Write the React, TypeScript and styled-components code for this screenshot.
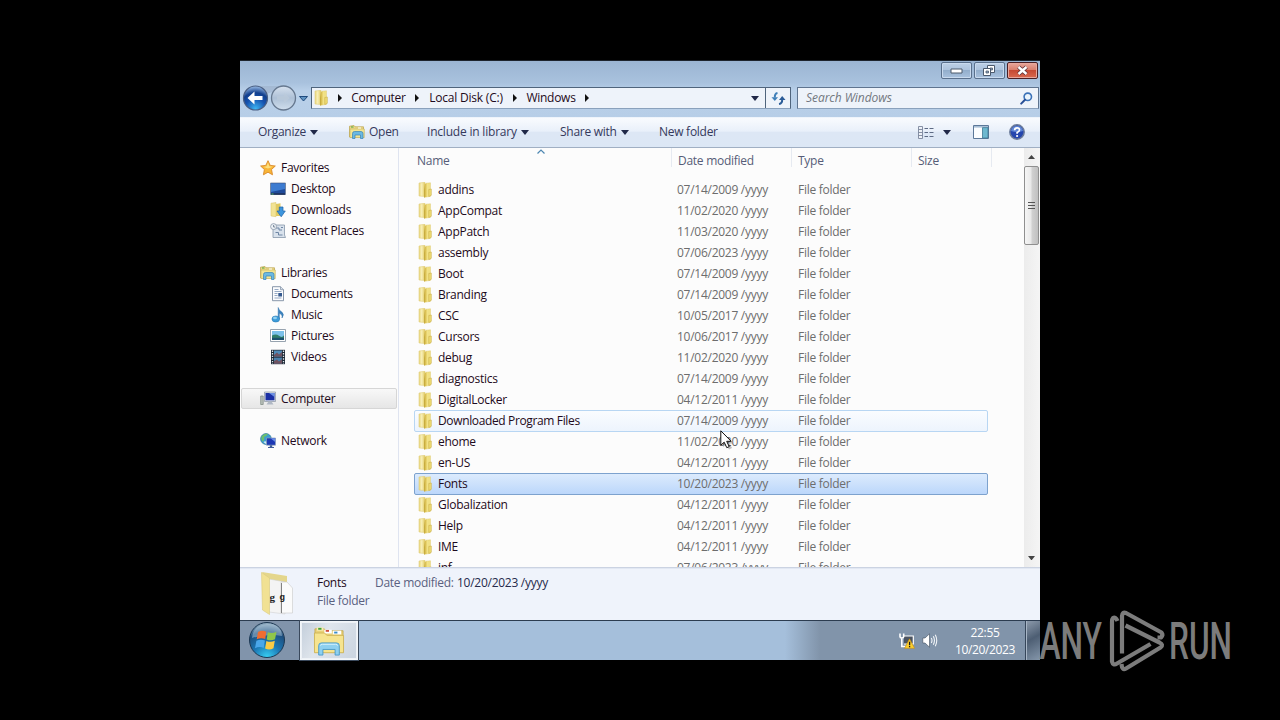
import React from "react";
import styled, { createGlobalStyle } from "styled-components";

const Global = createGlobalStyle`
  * { box-sizing: border-box; }
  body { margin: 0; background: #000; font: 12px/21px "Open Sans", "Noto Sans", sans-serif; color: #1e0a20; overflow: hidden; }
  svg { display: block; flex: none; }
`;

const Screen = styled.div`
  position: relative;
  width: 1280px;
  height: 720px;
  background: #000;
  padding: 60px 240px;
`;
const Desktop = styled.div`
  width: 800px;
  height: 600px;
  display: flex;
  flex-direction: column;
  background: #fcfcfc;
  white-space: nowrap;
  cursor: default;
`;
const Text = styled.span<{ $track?: number; $color?: string }>`
  letter-spacing: ${(p) => p.$track ?? -0.27}px;
  color: ${(p) => p.$color ?? "inherit"};
`;

/* Title bar and navigation */
const Frame = styled.header`
  height: 57px;
  border-top: 1px solid #1d242d;
  background: linear-gradient(#9bb5d3, #a9c2de 22px, #b9d0e9 30px, #b7cee7);
`;
const Caption = styled.div`
  height: 26px;
  display: flex;
  justify-content: flex-end;
  gap: 2px;
  padding: 1px 2px 0 0;
`;
const CaptionButton = styled.div<{ $close?: boolean }>`
  width: 31px;
  height: 17px;
  display: flex;
  align-items: center;
  justify-content: center;
  border: 1px solid ${(p) => (p.$close ? "#4a1f24" : "#5a708c")};
  border-radius: 2px;
  box-shadow: inset 0 0 0 1px ${(p) => (p.$close ? "#e8a79c" : "#c9daee")};
  background: ${(p) =>
    p.$close
      ? "linear-gradient(#e8a79c, #d97f6d 45%, #c64a34 50%, #d96a50)"
      : "linear-gradient(#bdd0e6, #adc3dd 45%, #93aecc 50%, #a9c2de)"};
`;
const NavRow = styled.div`
  height: 22px;
  display: flex;
  align-items: center;
  padding: 0 1px 0 2px;
  line-height: 20px;
`;
const NavButtons = styled.div`
  width: 69px;
`;
const Address = styled.div`
  width: 480px;
  height: 22px;
  display: flex;
  align-items: center;
  border: 1px solid #4f647c;
  border-bottom-color: #8aa1bc;
  background: #eef3fa;
`;
const Crumb = styled.div<{ $w: number }>`
  width: ${(p) => p.$w}px;
  display: flex;
  align-items: center;
  justify-content: space-between;
`;
const Grow = styled.div`
  flex: 1;
`;
const DropZone = styled.div`
  width: 20px;
  display: flex;
  justify-content: center;
`;
const Refresh = styled.div`
  width: 25px;
  height: 20px;
  display: flex;
  align-items: center;
  justify-content: center;
  border-left: 1px solid #4f647c;
`;
const Search = styled.div`
  width: 242px;
  height: 22px;
  margin-left: 6px;
  padding: 0 5px 0 8px;
  display: flex;
  align-items: center;
  justify-content: space-between;
  border: 1px solid #5f748f;
  border-bottom-color: #8aa1bc;
  background: #eef3fa;
  font-style: italic;
  color: #72777f;
`;

/* Command bar */
const Toolbar = styled.div`
  height: 31px;
  display: flex;
  align-items: center;
  padding: 0 15px 1px 18px;
  border-top: 1px solid #eef4fb;
  border-bottom: 1px solid #a0afc3;
  background: linear-gradient(#f9fbfe, #e9f0fa 45%, #dde7f5 50%, #dce7f5);
  color: #35395c;
  line-height: 20px;
`;
const Command = styled.div<{ $w: number; $gap?: number }>`
  width: ${(p) => p.$w}px;
  display: flex;
  align-items: center;
  gap: ${(p) => p.$gap ?? 4}px;
`;

/* Body */
const Body = styled.div`
  height: 419px;
  display: flex;
`;
const Sidebar = styled.nav`
  width: 159px;
  padding: 9px 1px 0;
  border-right: 1px solid #dfe4f0;
`;
const SideItem = styled.div<{ $level?: number; $active?: boolean; $space?: boolean }>`
  height: 21px;
  margin-top: ${(p) => (p.$space ? 21 : 0)}px;
  padding-left: ${(p) => (p.$level ? 28 : 18)}px;
  display: flex;
  align-items: center;
  gap: 5px;
  border: 1px solid ${(p) => (p.$active ? "#d6d6d6" : "transparent")};
  border-radius: 2px;
  background: ${(p) => (p.$active ? "linear-gradient(#f8f8f8, #e6e6e6)" : "none")};
`;
const Files = styled.main`
  width: 625px;
  overflow: hidden;
`;
const Header = styled.div`
  height: 31px;
  padding-left: 18px;
  display: flex;
  color: #565c78;
`;
const Heading = styled.div<{ $w: number }>`
  position: relative;
  width: ${(p) => p.$w}px;
  height: 19px;
  margin-right: 6px;
  line-height: 26px;
  border-right: 1px solid #e6eaf1;
`;
const SortMark = styled.div`
  position: absolute;
  left: 120px;
  top: 1px;
`;
const Row = styled.div<{ $state?: string }>`
  width: 574px;
  height: 22px;
  margin: 0 0 -1px 15px;
  padding-left: 3px;
  display: flex;
  align-items: center;
  line-height: 20px;
  border: 1px solid
    ${(p) => (p.$state === "selected" ? "#7da2ce" : p.$state === "hover" ? "#b8d6f3" : "transparent")};
  border-radius: 2px;
  background: ${(p) =>
    p.$state === "selected"
      ? "linear-gradient(#dcebfd, #bcd7fb)"
      : p.$state === "hover"
        ? "linear-gradient(#fafcff, #edf4fd)"
        : "none"};
`;
const NameCell = styled.div`
  width: 259px;
  display: flex;
  align-items: center;
  gap: 5px;
`;
const Cell = styled.div<{ $w: number }>`
  width: ${(p) => p.$w}px;
  color: #6d6d6d;
`;
const Scrollbar = styled.div`
  width: 16px;
  padding-right: 1px;
  display: flex;
  flex-direction: column;
  align-items: center;
  background: linear-gradient(90deg, #ececec, #f5f5f5);
`;
const ScrollEnd = styled.div`
  height: 18px;
  display: flex;
  align-items: center;
`;
const Thumb = styled.div`
  width: 15px;
  height: 79px;
  display: flex;
  align-items: center;
  justify-content: center;
  border: 1px solid #8f8f8f;
  border-radius: 2px;
  background: linear-gradient(90deg, #f5f5f5, #e9e9e9 45%, #d0d0d0 55%, #c0c0c0);
`;

const Details = styled.footer`
  height: 53px;
  display: flex;
  padding: 3px 0 0 20px;
  border-top: 1px solid #cbd3e2;
  box-shadow: inset 0 1px #e2e8f3;
  background: #eff3fb;
  color: #5a6180;
  line-height: 18px;
`;
const DetailColumn = styled.div<{ $w: number }>`
  width: ${(p) => p.$w}px;
  padding-top: 3px;
  display: flex;
  flex-direction: column;
`;
const Preview = styled.div`
  width: 57px;
`;

/* Taskbar */
const Taskbar = styled.div`
  height: 40px;
  display: flex;
  border-top: 1px solid #2c3c50;
  background: linear-gradient(90deg, #8194ab 0 59px, #a5bfdb 60px 545px, #8194aa 580px);
  color: #fff;
`;
const Start = styled.div`
  width: 60px;
  padding-left: 8px;
`;
const TaskButton = styled.div`
  width: 58px;
  height: 39px;
  display: flex;
  align-items: center;
  justify-content: center;
  border: 1px solid #f2f6fa;
  outline: 1px solid #3a495c;
  box-shadow: inset 0 0 0 1px #edf1f6;
  background: linear-gradient(120deg, #c3cedb, #dfe5ec 40%, #cad4e0);
`;
const Tray = styled.div`
  display: flex;
  align-items: center;
  gap: 7px;
  padding-right: 14px;
`;
const Clock = styled.div`
  width: 66px;
  display: flex;
  flex-direction: column;
  align-items: center;
  padding-top: 3px;
  line-height: 17px;
`;
const ShowDesktop = styled.div`
  width: 15px;
  margin-left: 7px;
  border-left: 1px solid #36465a;
  box-shadow: inset 1px 0 #a8b6c6;
  background: linear-gradient(150deg, #8d9bac, #4d5e73 45%, #8496aa);
`;
const Pointer = styled.div`
  position: absolute;
  left: 720px;
  top: 430px;
`;
const Watermark = styled.div`
  position: absolute;
  left: 1036px;
  top: 604px;
`;

/* Glyphs */
const Down = ({ w = 8, c = "#202848" }: { w?: number; c?: string }) => (
  <svg width={w} height={w / 2 + 1} viewBox="0 0 8 5"><path d="M0 0H8L4 5Z" fill={c} /></svg>
);
const Right = () => (
  <svg width="4" height="8" viewBox="0 0 4 8"><path d="M0 0L4 4L0 8Z" fill="#111" /></svg>
);
const Folder = () => (
  <svg width="15" height="16" viewBox="0 0 15 16">
    <defs>
      <linearGradient id="fl" x2="1"><stop stopColor="#e9d77c" /><stop offset=".45" stopColor="#f8efb8" /><stop offset="1" stopColor="#e0c95f" /></linearGradient>
      <linearGradient id="fr" x2="1"><stop stopColor="#bfa233" /><stop offset=".5" stopColor="#dfc65a" /><stop offset="1" stopColor="#f3e48c" /></linearGradient>
    </defs>
    <path d="M8 1.2L12.5 .8V14.3L8 15Z" fill="#f0e083" stroke="#e0cc78" strokeWidth=".5" />
    <path d="M1 1L7 .3V14.5L1 14Z" fill="url(#fl)" stroke="#e0cf7c" strokeWidth=".6" />
    <path d="M6 8L7 1.8L9.5 1.2V14.8L6 15.8Z" fill="url(#fr)" />
    <path d="M10.8 7.5L13.3 7V13.3L10.8 14.5Z" fill="#efdc72" stroke="#c9af4c" strokeWidth=".6" />
  </svg>
);
const Library = ({ w = 16, h = 14 }: { w?: number; h?: number }) => (
  <svg width={w} height={h} viewBox="0 0 16 14">
    <path d="M.5 12V1.2L5 .5L6 1.8H14.5V12Z" fill="#ecd988" stroke="#b9a14a" strokeWidth=".7" />
    <path d="M1 4H15.3V12.5H1Z" fill="#f3e594" stroke="#c5ae58" strokeWidth=".6" />
    <path d="M2 2h2.5" stroke="#4aa53c" /><path d="M9 3h3" stroke="#fff" />
    <path d="M3.5 13.5V8.5Q3.5 6.5 5.5 6.5H12Q14 6.5 14 8.5V13.5H11.5V10H6V13.5Z" fill="#6bb9e2" stroke="#3583b8" strokeWidth=".7" />
  </svg>
);
const Star = () => (
  <svg width="16" height="16" viewBox="0 0 16 16">
    <path d="M8 .7L10.2 5.4L15.3 6L11.5 9.5L12.5 14.8L8 12.2L3.4 14.8L4.4 9.5L.6 6L5.8 5.4Z" fill="#f8b537" stroke="#d98a2a" strokeWidth=".9" strokeLinejoin="round" />
    <path d="M8 2.5L9.3 6.3L13 6.8L8 8.5L3.5 7L6.6 6.3Z" fill="#fde07f" />
  </svg>
);
const Monitor = () => (
  <svg width="16" height="14" viewBox="0 0 16 14">
    <path d="M.5 1H15.5V12.5H.5Z" fill="#1f4a99" stroke="#6d7f99" strokeWidth=".8" />
    <path d="M1 1.5H15V7L1 10Z" fill="#3c7bd0" />
    <path d="M1 12H15" stroke="#20335c" strokeWidth="1.6" /><path d="M1.5 12h2" stroke="#55c367" />
  </svg>
);
const Downloads = () => (
  <svg width="16" height="16" viewBox="0 0 16 16">
    <path d="M1 1.2L6 .5V14.7L1 14Z" fill="#f2e394" stroke="#d5c06b" strokeWidth=".5" />
    <path d="M6 2L10.5 1.2V14H6Z" fill="#e0c961" />
    <path d="M9.3 5H13V9H15.3L11.2 14.8L7 9H9.3Z" fill="#3d95dd" stroke="#1e63a8" strokeWidth=".7" />
  </svg>
);
const Recent = () => (
  <svg width="16" height="16" viewBox="0 0 16 16">
    <path d="M4 2H14.5V12L15.5 14.5H3V4Z" fill="#d9e2ec" stroke="#8797aa" strokeWidth=".8" />
    <path d="M6 5h3v2h3M5.5 9.5h3v2.5h4M11 4.5h2" stroke="#6f86a4" fill="none" />
    <circle cx="3.6" cy="3.6" r="3" fill="#eef2f6" stroke="#8997a8" strokeWidth=".8" />
    <path d="M3.6 2V4H5.2" stroke="#5b6c82" fill="none" strokeWidth=".8" />
  </svg>
);
const Documents = () => (
  <svg width="16" height="16" viewBox="0 0 16 16">
    <path d="M2.5 .7H10.5L13.5 3.7V14.7H2.5Z" fill="#fbfcfe" stroke="#7c8ca2" strokeWidth=".9" />
    <path d="M10.5 .7V3.7H13.5" fill="#d7e0ea" stroke="#7c8ca2" strokeWidth=".7" />
    <path d="M4.5 3.5h4M4.5 5.5h7M4.5 7.5h3M4.5 9.5h3M4.5 12h7" stroke="#8aa0bd" strokeWidth=".9" />
    <path d="M8.3 7H12V10.5H8.3Z" fill="#34598f" />
  </svg>
);
const Music = () => (
  <svg width="16" height="16" viewBox="0 0 16 16">
    <path d="M8.2 .5Q8.8 3.5 11.8 5Q14.8 7.3 12 11Q12.7 7.5 9.3 6.3V12H8.2Z" fill="#3b83bf" stroke="#2f70a9" strokeWidth=".5" />
    <ellipse cx="5.8" cy="12" rx="3.9" ry="3.1" fill="#3d9bd8" stroke="#2a78b0" strokeWidth=".5" />
    <ellipse cx="5" cy="11" rx="2" ry="1.2" fill="#8fd0f2" />
  </svg>
);
const Pictures = () => (
  <svg width="16" height="13" viewBox="0 0 16 13">
    <path d="M.5 .5H15.5V12.5H.5Z" fill="#fff" stroke="#8b98a6" strokeWidth=".9" />
    <path d="M2 2H14V11H2Z" fill="#7cc1ea" />
    <path d="M2 6.5Q6 4.3 9 6.8T14 6.3V11H2Z" fill="#2f7d6a" />
    <path d="M2 8.8H14V11H2Z" fill="#1b506e" />
  </svg>
);
const Videos = () => (
  <svg width="16" height="16" viewBox="0 0 16 16">
    <path d="M1 .8H15V15.2H1Z" fill="#1c2835" />
    <path d="M4 1.5H12V7.6H4Z" fill="#4f8bb8" /><path d="M4 8.6H12V14.7H4Z" fill="#4880ad" />
    <path d="M4 6L7 3.5L9 5.5L12 3V7.6H4ZM4 12L7 10.5L9 12.5L12 10V14.7H4Z" fill="#6f5361" />
    <path d="M2.5 1.5V15M13.5 1.5V15" stroke="#dfe6ec" strokeWidth="1.3" strokeDasharray="1.4 1.2" />
  </svg>
);
const Computer = () => (
  <svg width="16" height="15" viewBox="0 0 16 15">
    <path d="M.7 5H3.2V13.5H.7Z" fill="#b9c1ba" stroke="#7b867f" strokeWidth=".7" />
    <path d="M4.5 1H15.5V10.5H4.5Z" fill="#dfe4ea" stroke="#8a94a2" strokeWidth=".7" />
    <path d="M5.5 2H14.5V9.3H5.5Z" fill="#1b2fa4" /><path d="M9 2H14.5V6Z" fill="#6c8fe2" />
    <path d="M8.5 10.5H11.5L13.5 13.5H6.5Z" fill="#b0b8c4" />
  </svg>
);
const Network = () => (
  <svg width="16" height="16" viewBox="0 0 16 16">
    <circle cx="6" cy="6" r="5.4" fill="#3d9ed0" stroke="#2b7393" strokeWidth=".7" />
    <path d="M2 3Q5 0 8 1Q6 4 4 4Q5 7 2.5 8.5Q.5 5 2 3Z" fill="#6cc06c" />
    <path d="M3.5 9Q6 7 7 10V11.2Q5 11 3.5 9Z" fill="#d6f0f2" />
    <path d="M6.5 5H15.5V12.2H6.5Z" fill="#1c38b4" stroke="#8fa2b8" strokeWidth=".7" />
    <path d="M10.5 5.3H15.2V9Z" fill="#6a8ee6" /><path d="M9.8 12.3H12.2V14H14V15H8V14H9.8Z" fill="#3f5c97" />
  </svg>
);
const BackForward = () => (
  <svg width="68" height="28" viewBox="0 0 68 28">
    <defs>
      <radialGradient id="bk" cx=".5" cy=".95" r=".95"><stop stopColor="#3fb6f3" /><stop offset=".45" stopColor="#1553b0" /><stop offset=".7" stopColor="#123f8d" /><stop offset="1" stopColor="#9bbde6" /></radialGradient>
      <linearGradient id="fw" x2="0" y2="1"><stop stopColor="#d7e2ef" /><stop offset=".5" stopColor="#adc0d6" /><stop offset="1" stopColor="#d0deed" /></linearGradient>
    </defs>
    <path d="M13 2H42V9Q28 5 20 14Z" fill="#9fb4cd" opacity=".7" />
    <circle cx="13.5" cy="14" r="12" fill="url(#bk)" stroke="#4a5f83" strokeWidth="1.2" />
    <path d="M5.5 14L12.5 7.5V12H20.5V16H12.5V20.5Z" fill="#fff" />
    <circle cx="41.5" cy="14" r="12" fill="url(#fw)" stroke="#66788f" strokeWidth="1.3" />
    <path d="M35 12.3H42V9L48 14L42 19V15.7H35Z" fill="#bccada" opacity=".7" />
    <path d="M57.5 12.5H65.5L61.5 17Z" fill="#5f93c2" stroke="#1f4a7d" />
  </svg>
);
const RefreshIcon = () => (
  <svg width="15" height="13" viewBox="0 0 15 13">
    <path d="M6.5 1Q3.7 1.5 3.8 5.5" stroke="#3f7fb8" strokeWidth="2" fill="none" /><path d="M.5 5.2H7L3.8 9Z" fill="#3f7fb8" />
    <path d="M8 12Q11.3 11.5 11.2 7.5" stroke="#2b5c98" strokeWidth="2" fill="none" /><path d="M8 8L11.2 4L14.5 8Z" fill="#2b5c98" />
  </svg>
);
const Magnifier = () => (
  <svg width="13" height="13" viewBox="0 0 13 13">
    <circle cx="7.8" cy="4.8" r="3.7" fill="#eaf4fc" stroke="#3b72b8" strokeWidth="1.6" />
    <path d="M5 7.8L1.2 11.6" stroke="#274f96" strokeWidth="2" strokeLinecap="round" />
  </svg>
);
const ViewIcon = () => (
  <svg width="16" height="13" viewBox="0 0 16 13">
    <path d="M.5 .5H4.5V12.5H.5ZM.5 3.5H4.5M.5 6.5H4.5M.5 9.5H4.5" fill="#eef2f8" stroke="#7a869c" strokeWidth=".9" />
    <path d="M6.5 2.5H10M11.5 2.5H15.5M6.5 6.5H10M11.5 6.5H15.5M6.5 10.5H10M11.5 10.5H15.5" stroke="#5d6a84" />
  </svg>
);
const PaneIcon = () => (
  <svg width="16" height="14" viewBox="0 0 16 14">
    <path d="M.5 .5H15.5V13.5H.5Z" fill="#fbfdff" stroke="#5c7899" />
    <path d="M1 1H15V2.6H1Z" fill="#a9bfd6" /><path d="M9.5 2.6H15V13H9.5Z" fill="#6db8cf" stroke="#3f7793" strokeWidth=".8" />
  </svg>
);
const HelpIcon = () => (
  <svg width="16" height="16" viewBox="0 0 16 16">
    <circle cx="8" cy="8" r="7.2" fill="#2546ae" stroke="#6c7c9a" strokeWidth="1.5" />
    <path d="M2 7Q3 2 8 2T14 7Q8 9 2 7Z" fill="#5f86d6" />
    <path d="M5.6 6.2Q5.7 3.8 8.1 3.8T10.5 6Q10.4 7.3 8.1 8.6V9.8" fill="none" stroke="#fff" strokeWidth="1.7" />
    <circle cx="8.1" cy="12" r="1.1" fill="#fff" />
  </svg>
);
const FontsFolder = () => (
  <svg width="36" height="46" viewBox="0 0 36 46">
    <path d="M2 1L27 5V20L9 14Z" fill="#e4d68c" />
    <path d="M9 8L20 10L25 11V43L9 41Z" fill="#f4f4f4" stroke="#d0d0d0" strokeWidth=".6" />
    <path d="M21 11H27L32.5 17V42L21 42Z" fill="#fbfbfb" stroke="#cacaca" strokeWidth=".6" />
    <path d="M21.5 12V42" stroke="#777" strokeWidth=".9" />
    <text x="9.5" y="30" fontSize="11" fontWeight="700" fontFamily="Liberation Serif, serif" fill="#222">g</text>
    <text x="19.5" y="29" fontSize="9" fontWeight="700" fontFamily="Liberation Sans, sans-serif" fill="#222">g</text>
    <path d="M1.5 1.5L9.5 7V43.5L2.5 39Z" fill="#f1e193" stroke="#dccb7c" strokeWidth=".6" />
  </svg>
);
const StartOrb = () => (
  <svg width="38" height="38" viewBox="0 0 38 38">
    <defs>
      <radialGradient id="orb" cx=".5" cy="1" r="1"><stop stopColor="#39d3f6" /><stop offset=".4" stopColor="#1b77b4" /><stop offset=".75" stopColor="#1e4f7e" /><stop offset="1" stopColor="#9db6c8" /></radialGradient>
    </defs>
    <circle cx="19" cy="19" r="17.5" fill="url(#orb)" stroke="#1d3853" />
    <path d="M4 17Q5 4 19 3T34 15Q20 12 4 17Z" fill="#bdd3e2" opacity=".45" />
    <path d="M10 11Q14 8.5 18.3 10.7L17.2 18Q13 16.3 8.7 18.3Z" fill="#ef6d31" />
    <path d="M19.8 11.3Q24 13 28.5 10.8L27 18.3Q23 20.3 18.7 18.5Z" fill="#8fc64a" />
    <path d="M8.4 19.8Q12.6 17.8 16.9 19.5L15.7 27Q11.5 25 7 27.2Z" fill="#4aa7ea" />
    <path d="M18.4 20Q22.7 21.8 26.8 19.8L25.5 27.2Q21.5 29.5 17.1 27.5Z" fill="#fbcb45" />
  </svg>
);
const ExplorerIcon = () => (
  <svg width="34" height="30" viewBox="0 0 34 32">
    <path d="M2 28V3H12L13.5 5H32V28Z" fill="#e8d076" stroke="#bfa348" strokeWidth=".8" />
    <path d="M4 1.5H11V5H4Z" fill="#f6ecb0" /><path d="M5.5 2H9V4H5.5Z" fill="#3da23a" />
    <path d="M12 4H20V8H12Z" fill="#fff" /><path d="M13.5 4.2H17V6.2H13.5Z" fill="#d0503c" />
    <path d="M21 5H30V9H21Z" fill="#fff" /><path d="M22.5 6H26V8H22.5Z" fill="#3a8cc8" />
    <path d="M1.5 7.5H12L15 10H32.5V28.5H1.5Z" fill="#f6e48f" stroke="#c9ae4e" strokeWidth=".8" />
    <path d="M6 31V21Q6 18 9 18H25Q28 18 28 21V31H23.5V25H10.5V31Z" fill="#8ed0f0" stroke="#3f94c8" strokeWidth=".9" />
    <path d="M8 21Q8 19.5 10 19.5H24Q26 19.5 26 21" stroke="#d9f2fc" fill="none" />
  </svg>
);
const TrayNetwork = () => (
  <svg width="16" height="16" viewBox="0 0 16 16">
    <path d="M5 3H14.3V11H5" fill="#4b5462" stroke="#fff" strokeWidth="1.2" />
    <path d="M1 .5V3.8Q1 5 2.8 5T4.700 3.8V.5M2.8 5V13.5H8" stroke="#fff" strokeWidth="1.6" fill="none" />
    <path d="M10.5 5.8L15.6 15.3H5.6Z" fill="#fbcf2e" stroke="#c98d10" strokeWidth=".6" />
    <path d="M10.6 8.8V12.2M10.6 13V14.3" stroke="#1c1c1c" strokeWidth="1.3" />
  </svg>
);
const Speaker = () => (
  <svg width="16" height="15" viewBox="0 0 16 15">
    <path d="M.8 5H3L7.5 .8V14.2L3 10H.8Z" fill="#fff" stroke="#3e4b5c" strokeWidth=".6" />
    <path d="M9.3 5Q10.7 7.5 9.3 10M11.3 3.3Q13.6 7.5 11.3 11.7M13.3 1.8Q16.2 7.5 13.3 13.2" stroke="#f2f5f8" strokeWidth="1.1" fill="none" />
  </svg>
);

const sections = [
  [["Favorites", Star], ["Desktop", Monitor], ["Downloads", Downloads], ["Recent Places", Recent]],
  [["Libraries", Library], ["Documents", Documents], ["Music", Music], ["Pictures", Pictures], ["Videos", Videos]],
  [["Computer", Computer]],
  [["Network", Network]],
] as [string, React.FC][][];

const files = [
  ["addins", "07/14/2009"], ["AppCompat", "11/02/2020"], ["AppPatch", "11/03/2020"],
  ["assembly", "07/06/2023"], ["Boot", "07/14/2009"], ["Branding", "07/14/2009"],
  ["CSC", "10/05/2017"], ["Cursors", "10/06/2017"], ["debug", "11/02/2020"],
  ["diagnostics", "07/14/2009"], ["DigitalLocker", "04/12/2011"],
  ["Downloaded Program Files", "07/14/2009", "hover"], ["ehome", "11/02/2020"],
  ["en-US", "04/12/2011"], ["Fonts", "10/20/2023", "selected"], ["Globalization", "04/12/2011"],
  ["Help", "04/12/2011"], ["IME", "04/12/2011"], ["inf", "07/06/2023"],
];

export default function App() {
  return (
    <Screen>
      <Global />
      <Desktop>
        <Frame>
          <Caption>
            <CaptionButton>
              <svg width="13" height="6"><path d="M1 1H12V5H1Z" fill="#fff" stroke="#4c5a6d" /></svg>
            </CaptionButton>
            <CaptionButton>
              <svg width="13" height="11" viewBox="0 0 13 11"><path d="M4.5 .5H11.5V7.5H4.5Z" fill="#fff" stroke="#4c5a6d" /><path d="M7 3H9.5V5H7Z" fill="#8fa6c0" stroke="#4c5a6d" strokeWidth=".8" /><path d="M.5 3.5H7.5V10.5H.5Z" fill="#fff" stroke="#4c5a6d" /><path d="M3 6H5.5V8H3Z" fill="#8fa6c0" stroke="#4c5a6d" strokeWidth=".8" /></svg>
            </CaptionButton>
            <CaptionButton $close>
              <svg width="13" height="11"><path d="M2.5 2L10.5 9M10.5 2L2.5 9" stroke="#5a3038" strokeWidth="4" /><path d="M2.5 2L10.5 9M10.5 2L2.5 9" stroke="#fff" strokeWidth="2.4" /></svg>
            </CaptionButton>
          </Caption>
          <NavRow>
            <NavButtons><BackForward /></NavButtons>
            <Address>
              <Crumb $w={30}><svg width="2" height="1" /><Folder /><Grow /><Right /></Crumb>
              <Crumb $w={77}><Grow /><Text>Computer</Text><Grow /><Right /></Crumb>
              <Crumb $w={98}><Grow /><Text $track={-0.2}>Local Disk (C:)</Text><Grow /><Right /></Crumb>
              <Crumb $w={72}><Grow /><Text>Windows</Text><Grow /><Right /></Crumb>
              <Grow />
              <DropZone><Down /></DropZone>
              <Refresh><RefreshIcon /></Refresh>
            </Address>
            <Search><Text $track={-0.05}>Search Windows</Text><Magnifier /></Search>
          </NavRow>
        </Frame>
        <Toolbar>
          <Command $w={91}><Text>Organize</Text><Down /></Command>
          <Command $w={78}><Library /><Text>Open</Text></Command>
          <Command $w={133}><Text $track={-0.2}>Include in library</Text><Down /></Command>
          <Command $w={99}><Text>Share with</Text><Down /></Command>
          <Command $w={120}><Text>New folder</Text></Command>
          <Grow />
          <Command $w={55} $gap={9}><ViewIcon /><Down /></Command>
          <Command $w={36}><PaneIcon /></Command>
          <HelpIcon />
        </Toolbar>
        <Body>
          <Sidebar>
            {sections.map((items, s) =>
              items.map(([label, Icon], i) => (
                <SideItem key={label} $level={i ? 1 : 0} $space={s > 0 && i === 0} $active={label === "Computer"}>
                  <Icon /><Text>{label}</Text>
                </SideItem>
              )),
            )}
          </Sidebar>
          <Files>
            <Header>
              <Heading $w={255}>
                <Text>Name</Text>
                <SortMark><svg width="8" height="5"><path d="M.5 4.5L4 1L7.5 4.5" fill="none" stroke="#4d87b2" strokeWidth="1.2" /></svg></SortMark>
              </Heading>
              <Heading $w={114}><Text>Date modified</Text></Heading>
              <Heading $w={114}><Text>Type</Text></Heading>
              <Heading $w={74}><Text>Size</Text></Heading>
            </Header>
            {files.map(([name, date, state]) => (
              <Row key={name} $state={state}>
                <NameCell><Folder /><Text $track={name.length > 20 ? -0.36 : undefined}>{name}</Text></NameCell>
                <Cell $w={121}><Text>{date} /yyyy</Text></Cell>
                <Cell $w={80}><Text>File folder</Text></Cell>
              </Row>
            ))}
          </Files>
          <Scrollbar>
            <ScrollEnd><svg width="7" height="4"><path d="M0 4L3.5 0L7 4Z" fill="#444" /></svg></ScrollEnd>
            <Thumb><svg width="7" height="8"><path d="M0 .5H7M0 3.5H7M0 6.5H7" stroke="#555" /></svg></Thumb>
            <Grow />
            <ScrollEnd><Down w={7} c="#444" /></ScrollEnd>
          </Scrollbar>
        </Body>
        <Details>
          <Preview><FontsFolder /></Preview>
          <DetailColumn $w={58}><Text $color="#1e0a20">Fonts</Text><Text>File folder</Text></DetailColumn>
          <DetailColumn $w={82}><Text>Date modified:</Text></DetailColumn>
          <DetailColumn $w={120}><Text $color="#262a4c">10/20/2023 /yyyy</Text></DetailColumn>
        </Details>
        <Taskbar>
          <Start><StartOrb /></Start>
          <TaskButton><ExplorerIcon /></TaskButton>
          <Grow />
          <Tray><TrayNetwork /><Speaker /></Tray>
          <Clock><Text>22:55</Text><Text $track={-0.35}>10/20/2023</Text></Clock>
          <ShowDesktop />
        </Taskbar>
      </Desktop>
      <Pointer>
        <svg width="14" height="20" viewBox="0 0 14 20">
          <path d="M3 3V17L6 14.5L9 19.5L12 18L9.5 13.5H13Z" fill="#000" opacity=".25" />
          <path d="M.8 .8V15.2L4.2 12.2L6.8 17.7L9.2 16.6L6.7 11.3H11.2Z" fill="#fff" stroke="#111" />
        </svg>
      </Pointer>
      <Watermark>
        <svg width="200" height="74" viewBox="0 0 200 74">
          <g fill="#7c7c7c" fontFamily="Roboto, sans-serif" fontSize="52" fontWeight="500">
            <text x="3.5" y="55" textLength="62.5" lengthAdjust="spacingAndGlyphs">ANY</text>
            <text x="133" y="55" textLength="63" lengthAdjust="spacingAndGlyphs">RUN</text>
          </g>
          <g fill="none" stroke="#7c7c7c" strokeWidth="4.2" strokeLinejoin="round">
            <path d="M81.5 17Q79.5 12.5 77 14Q76 15 76 18V57.5Q77 62 81 59.5L114.5 40" />
            <path d="M86 49.5V12Q86.5 7.5 90 9L125.5 28.5Q127.5 31 125 33.5L121.5 33.5" />
            <path d="M89.5 21.5L123.5 38.5Q128 41 124.5 43.5L90 64.5Q86 67 85.5 60" />
          </g>
        </svg>
      </Watermark>
    </Screen>
  );
}
